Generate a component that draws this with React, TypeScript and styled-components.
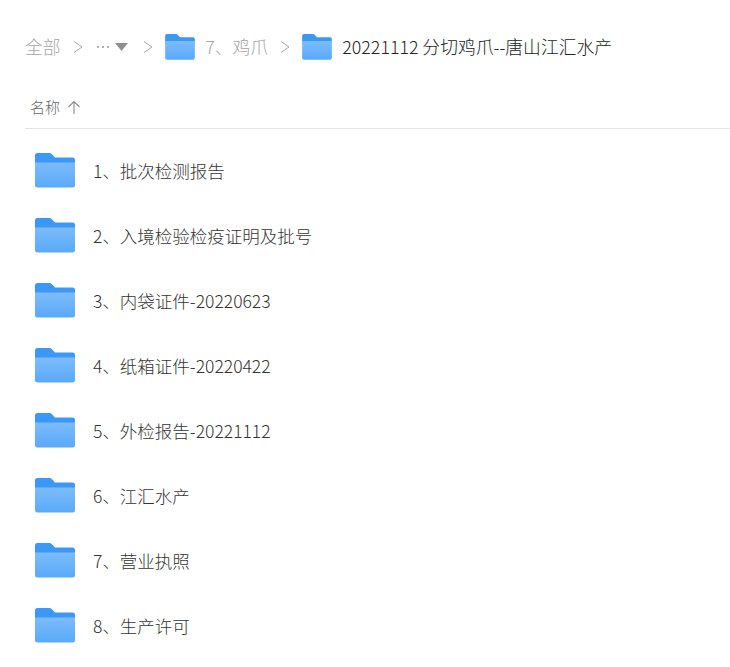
import styled, { createGlobalStyle } from "styled-components";

const GlobalStyle = createGlobalStyle`
    html, body {
        margin: 0;
        background: #fff;
        font-family: "Noto Sans CJK SC", "Noto Sans", sans-serif;
    }
`;

const Page = styled.div`
    width: 730px;
    height: 667px;
    overflow: hidden;
    padding: 21px 0 0 25px;
    box-sizing: border-box;
`;

const Breadcrumb = styled.div`
    display: flex;
    align-items: center;
    height: 52px;
`;

const Crumb = styled.span<{ $current?: boolean }>`
    font-size: 17.8px;
    font-weight: 300;
    line-height: 24px;
    margin-bottom: 2px;
    white-space: nowrap;
    color: ${(p) => (p.$current ? "#222" : "#a6a6a6")};
`;

const Chevron = styled.svg`
    flex: none;
    width: 10px;
    height: 14px;
    margin: 0 12.3px 0 12px;
`;

const More = styled.span`
    display: flex;
    align-items: center;
    gap: 6px;
    margin: 0 3px 0 2px;
`;

const Dots = styled.span`
    display: flex;
    gap: 3px;
`;

const Dot = styled.i`
    width: 2px;
    height: 2px;
    background: #b5b5b5;
`;

const Caret = styled.svg`
    width: 13px;
    height: 8px;
`;

const CrumbFolder = styled.span`
    display: flex;
    margin-right: 10px;
`;

const Header = styled.div`
    display: flex;
    align-items: center;
    gap: 7px;
    height: 51px;
    margin: 5px 0 9px;
    padding: 8px 0 0 5px;
    box-sizing: border-box;
    border-bottom: 1px solid #e4e4e4;
`;

const HeaderLabel = styled.span`
    font-size: 15px;
    font-weight: 300;
    margin-bottom: 2px;
    color: #666;
`;

const SortArrow = styled.svg`
    width: 14px;
    height: 15px;
`;

const List = styled.div`
    display: flex;
    flex-direction: column;
`;

const Row = styled.div`
    display: flex;
    align-items: center;
    gap: 18px;
    height: 65px;
    padding-left: 10px;
`;

const RowName = styled.span`
    font-size: 17.5px;
    font-weight: 300;
    line-height: 24px;
    color: #333;
    white-space: nowrap;
`;

const FolderSvg = styled.svg`
    flex: none;
    display: block;
`;

const items = [
    "1、批次检测报告",
    "2、入境检验检疫证明及批号",
    "3、内袋证件-20220623",
    "4、纸箱证件-20220422",
    "5、外检报告-20221112",
    "6、江汇水产",
    "7、营业执照",
    "8、生产许可",
];

const FolderIcon = ({ id, width, height }: { id: string; width: number; height: number }) => (
    <FolderSvg width={width} height={height} viewBox="0 0 40 35">
        <defs>
            <linearGradient id={id} x1="0" y1="0" x2="0" y2="1">
                <stop offset="0" stopColor="#7cbcfb" />
                <stop offset="1" stopColor="#5aa9fa" />
            </linearGradient>
        </defs>
        <path
            d="M0 2.5A2.5 2.5 0 0 1 2.5 0H14c1.6 0 2.4.6 3.4 1.700L20 4.500h17.500A2.500 2.500 0 0 1 40 7v6H0z"
            fill="#3c98f7"
        />
        <path
            d="M0 9.500h40V32a2.500 2.500 0 0 1-2.500 2.500h-35A2.500 2.500 0 0 1 0 32z"
            fill={`url(#${id})`}
        />
    </FolderSvg>
);

const ChevronIcon = () => (
    <Chevron viewBox="0 0 10 14">
        <path d="M1 1.500 9 7l-8 5.500" fill="none" stroke="#a8a8a8" strokeWidth="1" />
    </Chevron>
);

export default function App() {
    return (
        <Page>
            <GlobalStyle />
            <Breadcrumb>
                <Crumb>全部</Crumb>
                <ChevronIcon />
                <More>
                    <Dots>
                        <Dot />
                        <Dot />
                        <Dot />
                    </Dots>
                    <Caret viewBox="0 0 13 8">
                        <path d="M0 0h13L6.500 8z" fill="#8f8f8f" />
                    </Caret>
                </More>
                <ChevronIcon />
                <CrumbFolder>
                    <FolderIcon id="crumb-a" width={30} height={26} />
                </CrumbFolder>
                <Crumb>7、鸡爪</Crumb>
                <ChevronIcon />
                <CrumbFolder>
                    <FolderIcon id="crumb-b" width={30} height={26} />
                </CrumbFolder>
                <Crumb $current>20221112 分切鸡爪--唐山江汇水产</Crumb>
            </Breadcrumb>
            <Header>
                <HeaderLabel>名称</HeaderLabel>
                <SortArrow viewBox="0 0 14 15">
                    <path d="M7 14V1.500M1.500 7 7 1.500 12.500 7" fill="none" stroke="#8a8a8a" strokeWidth="1.100" />
                </SortArrow>
            </Header>
            <List>
                {items.map((name, index) => (
                    <Row key={index}>
                        <FolderIcon id={`row-${index}`} width={40} height={35} />
                        <RowName>{name}</RowName>
                    </Row>
                ))}
            </List>
        </Page>
    );
}
